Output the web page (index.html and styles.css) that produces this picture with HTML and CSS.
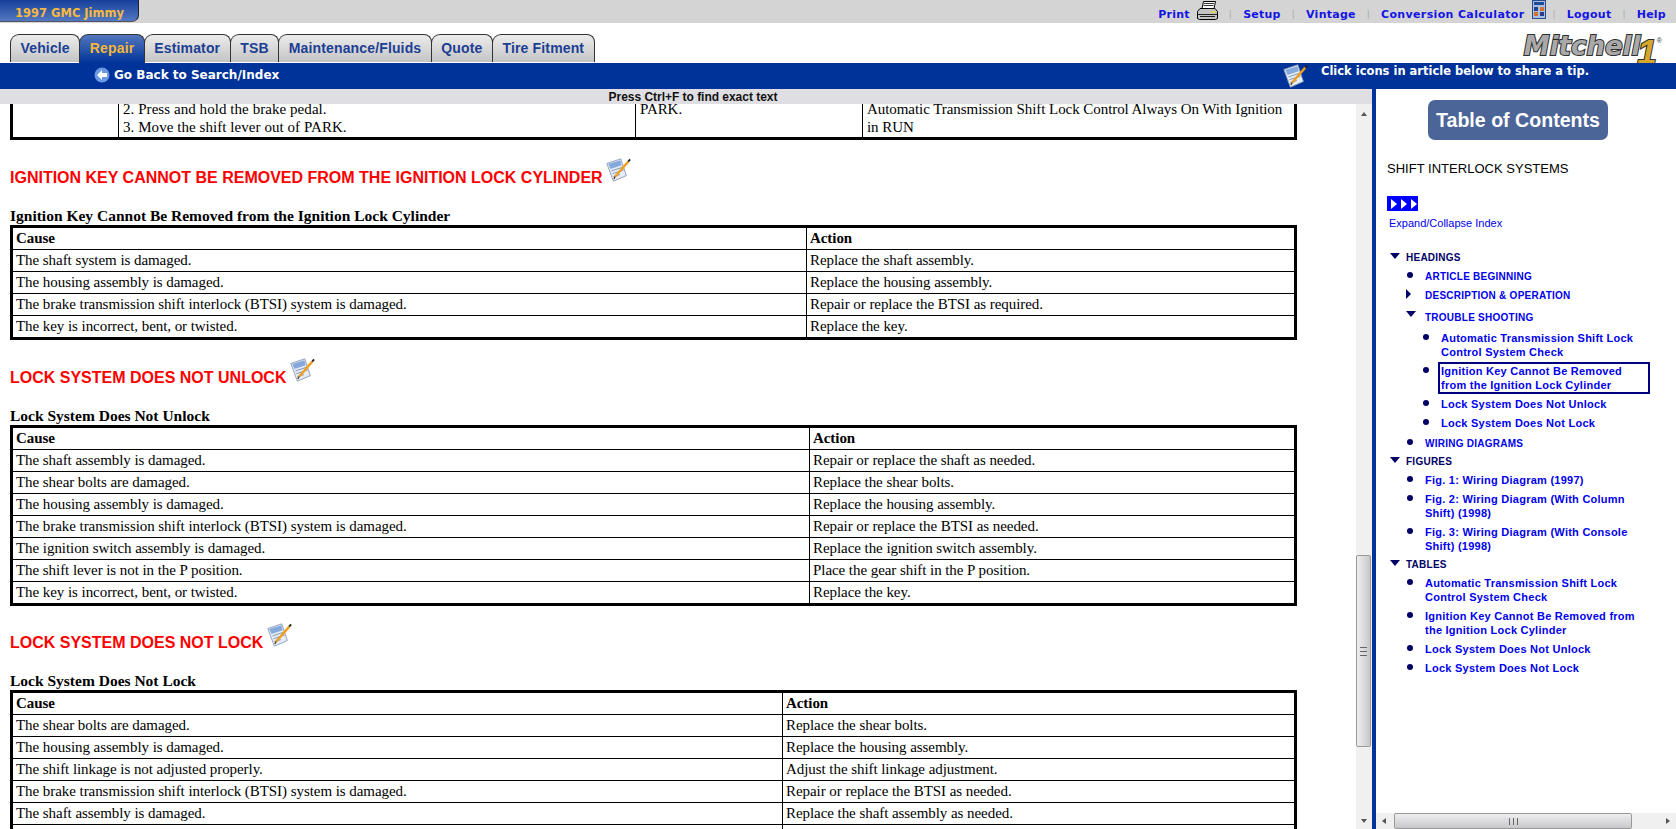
FILE: index.html
```html
<!DOCTYPE html>
<html lang="en">
<head>
    <meta charset="UTF-8">
    <title>Shift Interlock Systems</title>
    <link rel="stylesheet" href="styles.css">
</head>
<body>
    <svg class="defs" width="0" height="0">
        <symbol id="tip" viewBox="0 0 28 28">
            <path d="M2 7 L17 2 L23 20 L9 26 Z" fill="#e6edf7" stroke="#8a9cbb"/>
            <path d="M3.5 7.5 L16.5 3.5 L18 9 L6 13 Z" fill="#86a9dc"/>
            <path d="M7 15 L19 11 M8 18 L20 14 M9 21 L16 19" stroke="#7d90b0" fill="none"/>
            <path d="M11 21 L25 5" stroke="#ee9f1e" stroke-width="2.6" fill="none"/>
            <path d="M25 5 L27 2.5" stroke="#222" stroke-width="2" fill="none"/>
            <path d="M11 21 L9.5 23.5" stroke="#553300" stroke-width="1.4" fill="none"/>
        </symbol>
    </svg>

    <div class="topbar">
        <div class="vehicle-tab">1997 GMC Jimmy</div>
        <nav class="toplinks">
            <a href="#">Print</a>
            <svg class="print-icon" width="21" height="19" viewBox="0 0 21 19">
                <path d="M6.5 .5 H18.5 L17 7.5 H5 Z" fill="#fff" stroke="#000"/>
                <path d="M7 2.5 H17 M6.5 4.5 H16.5" stroke="#333"/>
                <path d="M3 7.5 H18 L20.5 10.5 V17.5 L18.5 18.5 H2.5 L.5 17.5 V10.5 Z" fill="#c4c4c4" stroke="#000"/>
                <path d="M1 13.5 H20 M3 15.5 H18" stroke="#222"/>
                <rect x="14" y="10" width="4" height="2" fill="#e6d04a"/>
            </svg>
            <span class="sep">|</span>
            <a href="#">Setup</a>
            <span class="sep">|</span>
            <a href="#">Vintage</a>
            <span class="sep">|</span>
            <a class="calc-link" href="#">Conversion Calculator</a>
            <svg class="calc-icon" width="14" height="19" viewBox="0 0 14 19">
                <rect x=".5" y=".5" width="13" height="18" fill="#a8bfe2" stroke="#2b4c8c"/>
                <rect x="2" y="2" width="10" height="3" fill="#234a96"/>
                <rect x="2" y="7" width="4" height="4" fill="#27408b"/>
                <rect x="8" y="7" width="4" height="4" fill="#d2752a"/>
                <rect x="2" y="12" width="4" height="4" fill="#d2752a"/>
                <rect x="8" y="12" width="4" height="4" fill="#27408b"/>
            </svg>
            <span class="sep sep-after-calc">|</span>
            <a href="#">Logout</a>
            <span class="sep">|</span>
            <a href="#">Help</a>
        </nav>
    </div>

    <div class="tabrow">
        <div class="tabs">
            <a class="tab" href="#">Vehicle</a>
            <a class="tab active" href="#">Repair</a>
            <a class="tab" href="#">Estimator</a>
            <a class="tab" href="#">TSB</a>
            <a class="tab" href="#">Maintenance/Fluids</a>
            <a class="tab" href="#">Quote</a>
            <a class="tab" href="#">Tire Fitment</a>
        </div>
        <div class="logo"><span class="logo-word">Mitchell</span><span class="logo-one">1</span><span class="logo-reg">®</span></div>
    </div>

    <div class="bluebar">
        <a class="backlink" href="#">
            <svg width="16" height="18" viewBox="0 0 16 18">
                <circle cx="8" cy="9" r="7.5" fill="#6a9ae6"/>
                <path d="M3 9 L8 4 V7 H13 V11 H8 V14 Z" fill="#fff"/>
            </svg>
            Go Back to Search/Index
        </a>
        <div class="tipnote">
            <svg class="tip-icon" width="28" height="26"><use href="#tip"/></svg>
            <span>Click icons in article below to share a tip.</span>
        </div>
    </div>

    <div class="panes">
        <div class="left">
            <div class="findbar">Press Ctrl+F to find exact text</div>
            <div class="article-row">
                <div class="article-wrap">
                    <div class="article">
                        <table class="t1">
                            <tr>
                                <td class="c1"></td>
                                <td class="c2">2. Press and hold the brake pedal.<br>3. Move the shift lever out of PARK.</td>
                                <td class="c3">PARK.</td>
                                <td>Automatic Transmission Shift Lock Control Always On With Ignition in RUN</td>
                            </tr>
                        </table>

                        <h2>IGNITION KEY CANNOT BE REMOVED FROM THE IGNITION LOCK CYLINDER <svg class="tip-icon" width="28" height="26"><use href="#tip"/></svg></h2>
                        <h3>Ignition Key Cannot Be Removed from the Ignition Lock Cylinder</h3>
                        <table class="t2">
                            <tr><th>Cause</th><th>Action</th></tr>
                            <tr><td>The shaft system is damaged.</td><td>Replace the shaft assembly.</td></tr>
                            <tr><td>The housing assembly is damaged.</td><td>Replace the housing assembly.</td></tr>
                            <tr><td>The brake transmission shift interlock (BTSI) system is damaged.</td><td>Repair or replace the BTSI as required.</td></tr>
                            <tr><td>The key is incorrect, bent, or twisted.</td><td>Replace the key.</td></tr>
                        </table>

                        <h2>LOCK SYSTEM DOES NOT UNLOCK <svg class="tip-icon" width="28" height="26"><use href="#tip"/></svg></h2>
                        <h3>Lock System Does Not Unlock</h3>
                        <table class="t3">
                            <tr><th>Cause</th><th>Action</th></tr>
                            <tr><td>The shaft assembly is damaged.</td><td>Repair or replace the shaft as needed.</td></tr>
                            <tr><td>The shear bolts are damaged.</td><td>Replace the shear bolts.</td></tr>
                            <tr><td>The housing assembly is damaged.</td><td>Replace the housing assembly.</td></tr>
                            <tr><td>The brake transmission shift interlock (BTSI) system is damaged.</td><td>Repair or replace the BTSI as needed.</td></tr>
                            <tr><td>The ignition switch assembly is damaged.</td><td>Replace the ignition switch assembly.</td></tr>
                            <tr><td>The shift lever is not in the P position.</td><td>Place the gear shift in the P position.</td></tr>
                            <tr><td>The key is incorrect, bent, or twisted.</td><td>Replace the key.</td></tr>
                        </table>

                        <h2>LOCK SYSTEM DOES NOT LOCK <svg class="tip-icon" width="28" height="26"><use href="#tip"/></svg></h2>
                        <h3>Lock System Does Not Lock</h3>
                        <table class="t4">
                            <tr><th>Cause</th><th>Action</th></tr>
                            <tr><td>The shear bolts are damaged.</td><td>Replace the shear bolts.</td></tr>
                            <tr><td>The housing assembly is damaged.</td><td>Replace the housing assembly.</td></tr>
                            <tr><td>The shift linkage is not adjusted properly.</td><td>Adjust the shift linkage adjustment.</td></tr>
                            <tr><td>The brake transmission shift interlock (BTSI) system is damaged.</td><td>Repair or replace the BTSI as needed.</td></tr>
                            <tr><td>The shaft assembly is damaged.</td><td>Replace the shaft assembly as needed.</td></tr>
                            <tr><td>The lock cylinder or key is damaged.</td><td>Replace the lock cylinder or key as needed.</td></tr>
                        </table>
                    </div>
                </div>

                <div class="vscroll">
                    <div class="arrow-up"></div>
                    <div class="track"><div class="thumb"><span class="grip"></span></div></div>
                    <div class="arrow-down"></div>
                </div>
            </div>
        </div>

        <aside class="sidebar">
            <div class="sidebar-body">
                <div class="toc-btn">Table of Contents</div>
                <div class="doc-title">SHIFT INTERLOCK SYSTEMS</div>
                <div class="expand-icon"><i></i><i></i><i></i></div>
                <a class="expand-link" href="#">Expand/Collapse Index</a>

                <ul class="tree">
                    <li class="open top"><span class="caps">HEADINGS</span>
                        <ul>
                            <li class="dot"><a class="caps" href="#">ARTICLE BEGINNING</a></li>
                            <li class="closed"><a class="caps" href="#">DESCRIPTION &amp; OPERATION</a></li>
                            <li class="open gap"><a class="caps" href="#">TROUBLE SHOOTING</a>
                                <ul class="deep">
                                    <li class="dot"><a href="#">Automatic Transmission Shift Lock<br>Control System Check</a></li>
                                    <li class="dot"><a class="current" href="#">Ignition Key Cannot Be Removed<br>from the Ignition Lock Cylinder</a></li>
                                    <li class="dot"><a href="#">Lock System Does Not Unlock</a></li>
                                    <li class="dot"><a href="#">Lock System Does Not Lock</a></li>
                                </ul>
                            </li>
                            <li class="dot"><a class="caps" href="#">WIRING DIAGRAMS</a></li>
                        </ul>
                    </li>
                    <li class="open top"><span class="caps">FIGURES</span>
                        <ul>
                            <li class="dot"><a href="#">Fig. 1: Wiring Diagram (1997)</a></li>
                            <li class="dot"><a href="#">Fig. 2: Wiring Diagram (With Column<br>Shift) (1998)</a></li>
                            <li class="dot"><a href="#">Fig. 3: Wiring Diagram (With Console<br>Shift) (1998)</a></li>
                        </ul>
                    </li>
                    <li class="open top"><span class="caps">TABLES</span>
                        <ul>
                            <li class="dot"><a href="#">Automatic Transmission Shift Lock<br>Control System Check</a></li>
                            <li class="dot"><a href="#">Ignition Key Cannot Be Removed from<br>the Ignition Lock Cylinder</a></li>
                            <li class="dot"><a href="#">Lock System Does Not Unlock</a></li>
                            <li class="dot"><a href="#">Lock System Does Not Lock</a></li>
                        </ul>
                    </li>
                </ul>
            </div>
            <div class="hscroll">
                <div class="arrow-left"></div>
                <div class="hthumb"><span class="hgrip"></span></div>
                <div class="arrow-right"></div>
            </div>
        </aside>
    </div>
</body>
</html>
```

FILE: styles.css
```css
html, body {
    margin: 0;
    padding: 0;
    height: 100%;
    overflow: hidden;
}

body {
    background: #fff;
    color: #000;
    font-family: "Liberation Sans", Arial, sans-serif;
    display: flex;
    flex-direction: column;
}

a {
    text-decoration: none;
}

.defs {
    display: none;
}

/* top grey strip */
.topbar {
    height: 23px;
    background: #d4d4d4;
    display: flex;
    justify-content: space-between;
    flex: none;
}

.vehicle-tab {
    width: 139px;
    height: 22px;
    padding-left: 15px;
    box-sizing: border-box;
    background: linear-gradient(#173f9a, #5278c0);
    border-right: 1px solid #223;
    border-bottom: 1px solid #556;
    border-bottom-right-radius: 7px;
    color: #f5b942;
    font: bold 11.5px/26px "DejaVu Sans", sans-serif;
}

.toplinks {
    display: flex;
    align-items: center;
    height: 23px;
    padding: 5px 10px 0 0;
    box-sizing: border-box;
    font: bold 11px "DejaVu Sans", sans-serif;
    letter-spacing: .25px;
}

.toplinks a {
    color: #1414e6;
}

.toplinks .calc-link {
    letter-spacing: .35px;
}

.sep {
    color: #aaa;
    font-weight: normal;
    font-size: 9px;
    margin: 0 11px;
}

.sep-after-calc {
    margin-left: 7px;
}

.print-icon {
    margin-left: 7px;
    margin-top: -8px;
}

.calc-icon {
    margin-left: 7px;
    margin-top: -10px;
}

/* tabs row */
.tabrow {
    height: 40px;
    flex: none;
    display: flex;
    justify-content: space-between;
    box-sizing: border-box;
    padding: 11px 0 0 10px;
}

.tabs {
    display: flex;
    height: 29px;
}

.tab {
    height: 28px;
    box-sizing: border-box;
    padding: 0 9.5px;
    background: linear-gradient(#ececec, #c4c4c4);
    border: 1px solid #333;
    border-bottom: none;
    border-radius: 9px 8px 0 0;
    color: #1c3f94;
    font: bold 14px/26px "Liberation Sans", sans-serif;
    letter-spacing: .15px;
    margin-right: -1px;
}

.tab.active {
    height: 29px;
    background: linear-gradient(#5377bd, #003399);
    color: #f2b73c;
}

/* the 1 hangs below the word, as in the printed logo */
.logo {
    margin: -7px 14px 0 0;
    height: 36px;
    line-height: 27px;
    white-space: nowrap;
}

.logo-word {
    font: italic bold 26px "DejaVu Sans", sans-serif;
    color: #a9a9a9;
    -webkit-text-stroke: 2px #2e2e2e;
    paint-order: stroke fill;
}

.logo-one {
    font: italic bold 35px "Liberation Sans", sans-serif;
    color: #d6a72c;
    -webkit-text-stroke: 2px #2e2e2e;
    paint-order: stroke fill;
    vertical-align: -9px;
    margin-left: -3px;
}

.logo-reg {
    font-size: 7px;
    vertical-align: 12px;
    color: #333;
}

/* blue bar */
.bluebar {
    height: 26px;
    flex: none;
    background: #003399;
    display: flex;
    color: #fff;
    font: bold 11.5px "DejaVu Sans", sans-serif;
}

.backlink {
    display: flex;
    align-items: center;
    gap: 4px;
    height: 24px;
    margin-left: 94px;
    color: #fff;
    font-size: 12px;
}

.tipnote {
    margin-left: auto;
    margin-right: 87px;
    display: flex;
    gap: 12px;
}

.tipnote span {
    margin-top: 1px;
}

/* main panes */
.panes {
    flex: 1;
    min-height: 0;
    display: flex;
}

.left {
    flex: 1;
    min-width: 0;
    display: flex;
    flex-direction: column;
}

.findbar {
    height: 15px;
    flex: none;
    padding-left: 14px;
    background: #dfdfe3;
    text-align: center;
    font: bold 12px/16px "Liberation Sans", sans-serif;
    letter-spacing: -.03px;
    color: #111;
}

.article-row {
    flex: 1;
    min-height: 0;
    display: flex;
}

.article-wrap {
    flex: 1;
    min-width: 0;
    overflow: hidden;
}

.article {
    width: 1287px;
    margin: -8px 0 0 10px;
    font-family: "Liberation Serif", "Times New Roman", serif;
    font-size: 15px;
    letter-spacing: -.06px;
}

table {
    width: 100%;
    border-collapse: collapse;
    border: 3px solid #000;
    table-layout: fixed;
}

td, th {
    box-sizing: border-box;
    border: 1px solid #000;
    padding: 1px 3px;
    height: 22px;
    text-align: left;
    vertical-align: top;
    font-size: 15px;
    line-height: 19px;
}

.t1 td {
    line-height: 18px;
    padding-left: 4px;
}

.t1 .c1 { width: 107px; }
.t1 .c2 { width: 517px; letter-spacing: .06px; }
.t1 .c3 { width: 227px; }

.t2 th:first-child { width: 795px; }
.t3 th:first-child { width: 798px; }
.t4 th:first-child { width: 771px; }

.t3 {
    margin-bottom: -1px;
}

.article h2 {
    margin: 0;
    padding-top: 17px;
    height: 57px;
    box-sizing: border-box;
    color: #f00;
    font: bold 16px/18px "Liberation Sans", sans-serif;
    letter-spacing: 0;
}

.article h2 .tip-icon {
    margin-left: -3px;
}

.article h3 {
    margin: 10px 0 0;
    font-size: 15.5px;
    line-height: 18px;
    letter-spacing: 0;
}

/* scrollbars */
.vscroll {
    width: 16px;
    flex: none;
    background: #f0f0f0;
    display: flex;
    flex-direction: column;
}

.track {
    flex: 1;
    position: relative;
}

.arrow-up, .arrow-down {
    height: 16px;
    flex: none;
    position: relative;
}

.arrow-up::after, .arrow-down::after, .arrow-left::after, .arrow-right::after {
    content: "";
    position: absolute;
    border: 3px solid transparent;
}

.arrow-up::after {
    border-top: none;
    border-bottom: 4px solid #555;
    left: 5px;
    top: 8px;
}

.arrow-down::after {
    border-bottom: none;
    border-top: 4px solid #555;
    left: 5px;
    top: 6px;
}

.thumb {
    position: absolute;
    left: 0;
    right: 1px;
    top: 435px;
    height: 192px;
    background: linear-gradient(90deg, #eee, #c8c8cc);
    border: 1px solid #999;
    border-radius: 2px;
    box-sizing: border-box;
    display: flex;
    align-items: center;
    justify-content: center;
}

.grip {
    width: 7px;
    height: 7px;
    border-top: 1px solid #666;
    border-bottom: 1px solid #666;
    background: linear-gradient(#666, #666) center / 100% 1px no-repeat;
}

.sidebar {
    width: 300px;
    flex: none;
    border-left: 4px solid #003399;
    display: flex;
    flex-direction: column;
    min-height: 0;
}

.sidebar-body {
    flex: 1;
    min-height: 0;
    overflow: hidden;
    padding: 0 0 0 11px;
}

.toc-btn {
    width: 180px;
    height: 40px;
    margin: 11px 0 0 41px;
    background: #4b6599;
    border-radius: 7px;
    color: #fff;
    font: bold 19.6px/40px "Liberation Sans", sans-serif;
    text-align: center;
}

.doc-title {
    margin-top: 21px;
    font-size: 13px;
    line-height: 16px;
    letter-spacing: .02px;
    color: #000;
}

.expand-icon {
    margin-top: 19px;
    width: 31px;
    height: 15px;
    background: #0000ff;
    display: flex;
    align-items: center;
    gap: 4px;
    padding-left: 4px;
    box-sizing: border-box;
}

.expand-icon i {
    border-left: 6px solid #fff;
    border-top: 5px solid transparent;
    border-bottom: 5px solid transparent;
}

.expand-link {
    display: block;
    margin: 5px 0 0 2px;
    font-size: 11px;
    line-height: 14px;
    color: #0000ee;
}

.tree, .tree ul {
    list-style: none;
    margin: 0;
    padding: 0;
}

.tree {
    margin-top: 20px;
    padding-left: 3px;
    font: bold 11px/14px "Liberation Sans", sans-serif;
    letter-spacing: .25px;
    color: #000066;
}

.tree a {
    color: #0000ee;
}

.caps {
    font-size: 10px;
    line-height: 10px;
}

.tree li {
    position: relative;
    margin-bottom: 5px;
}

.tree > li {
    margin-bottom: 4px;
    padding-left: 16px;
}

.tree > li > ul {
    margin-top: 5px;
    padding-left: 19px;
}

.tree > li > ul > li:last-child {
    margin-bottom: 4px;
}

.tree ul.deep {
    margin-top: 7px;
    padding-left: 16px;
}

.tree li.gap {
    margin-top: 8px;
    margin-bottom: 6px;
}

li.dot::before {
    content: "";
    position: absolute;
    left: -18px;
    top: 3px;
    width: 6px;
    height: 6px;
    border-radius: 50%;
    background: #000066;
}

.top::before, li.gap::before {
    content: "";
    position: absolute;
    border-top: 6px solid #000066;
    border-left: 5px solid transparent;
    border-right: 5px solid transparent;
    left: 0;
    top: 3px;
}

li.gap::before {
    left: -19px;
    top: 1px;
}

li.closed::before {
    content: "";
    position: absolute;
    left: -19px;
    top: 1px;
    border-left: 5px solid #000066;
    border-top: 5px solid transparent;
    border-bottom: 5px solid transparent;
}

a.current {
    display: inline-block;
    outline: 2px solid #000080;
    width: 207px;
    padding-left: 1px;
    margin-left: -1px;
}

.hscroll {
    height: 16px;
    flex: none;
    background: #f0f0f0;
    display: flex;
    align-items: stretch;
}

.arrow-left, .arrow-right {
    width: 18px;
    flex: none;
    position: relative;
}

.arrow-left::after {
    border-left: none;
    border-right: 4px solid #555;
    left: 6px;
    top: 5px;
}

.arrow-right {
    margin-left: auto;
}

.arrow-right::after {
    border-right: none;
    border-left: 4px solid #555;
    left: 8px;
    top: 5px;
}

.hthumb {
    width: 238px;
    background: linear-gradient(#eee, #c8c8cc);
    border: 1px solid #999;
    border-radius: 2px;
    box-sizing: border-box;
    display: flex;
    align-items: center;
    justify-content: center;
}

.hgrip {
    width: 7px;
    height: 7px;
    border-left: 1px solid #666;
    border-right: 1px solid #666;
    background: linear-gradient(#666, #666) center / 1px 100% no-repeat;
}
```
